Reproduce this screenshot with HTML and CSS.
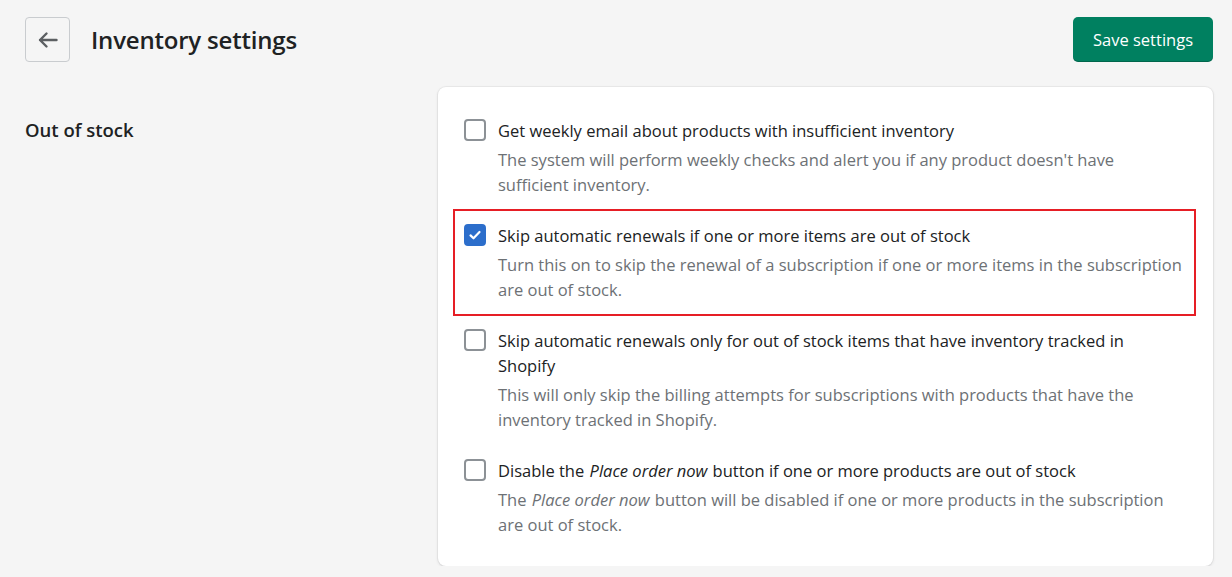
FILE: index.html
```html
<!DOCTYPE html>
<html lang="en">
<head>
<meta charset="utf-8">
<title>Inventory settings</title>
<link rel="stylesheet" href="styles.css">
</head>
<body>
<div class="page">
  <header class="topbar">
    <div class="title-group">
      <button class="back-btn" aria-label="Back">
        <svg width="22" height="22" viewBox="0 0 22 22"><path d="M19.5 11H3M9.5 4.5 3 11l6.5 6.5" fill="none" stroke="#5c5f62" stroke-width="2.4" stroke-linecap="round" stroke-linejoin="round"/></svg>
      </button>
      <h1 class="page-title">Inventory settings</h1>
    </div>
    <button class="save-btn">Save settings</button>
  </header>

  <section class="layout">
    <div class="section-label">Out of stock</div>
    <div class="card">
      <div class="option">
        <span class="checkbox"></span>
        <div class="option-text">
          <div class="option-title">Get weekly email about products with insufficient inventory</div>
          <div class="option-desc">The system will perform weekly checks and alert you if any product doesn't have sufficient inventory.</div>
        </div>
      </div>
      <div class="option highlighted">
        <span class="checkbox checked">
          <svg width="16" height="16" viewBox="0 0 16 16"><path d="M3.5 8.4l3 2.9L12.5 5" fill="none" stroke="#fff" stroke-width="2.2" stroke-linecap="round" stroke-linejoin="round"/></svg>
        </span>
        <div class="option-text">
          <div class="option-title">Skip automatic renewals if one or more items are out of stock</div>
          <div class="option-desc">Turn this on to skip the renewal of a subscription if one or more items in the subscription are out of stock.</div>
        </div>
      </div>
      <div class="option">
        <span class="checkbox"></span>
        <div class="option-text">
          <div class="option-title">Skip automatic renewals only for out of stock items that have inventory tracked in Shopify</div>
          <div class="option-desc">This will only skip the billing attempts for subscriptions with products that have the inventory tracked in Shopify.</div>
        </div>
      </div>
      <div class="option">
        <span class="checkbox"></span>
        <div class="option-text">
          <div class="option-title">Disable the <em>Place order now</em> button if one or more products are out of stock</div>
          <div class="option-desc">The <em>Place order now</em> button will be disabled if one or more products in the subscription are out of stock.</div>
        </div>
      </div>
    </div>
  </section>
</div>
</body>
</html>
```

FILE: styles.css
```css
* { box-sizing: border-box; }
html, body {
  margin: 0;
  padding: 0;
  background: #f5f5f5;
  font-family: "Open Sans", "Noto Sans", "Liberation Sans", sans-serif;
  color: #202223;
}
.page {
  padding: 17px 19px 0 25px;
}
.topbar {
  display: flex;
  align-items: center;
  justify-content: space-between;
  height: 45px;
}
.title-group {
  display: flex;
  align-items: center;
  gap: 21px;
}
.back-btn {
  width: 45px;
  height: 45px;
  border: 1px solid #c9cccf;
  border-radius: 4px;
  background: transparent;
  display: flex;
  align-items: center;
  justify-content: center;
  padding: 0;
}
.page-title {
  margin: 0;
  font-size: 24px;
  font-weight: 600;
  letter-spacing: -0.2px;
  color: #202223;
}
.save-btn {
  height: 45px;
  padding: 0 20px;
  background: #008060;
  color: #fff;
  border: none;
  border-radius: 5px;
  font-family: inherit;
  font-size: 16.5px;
  box-shadow: inset 0 -1px 0 rgba(0,0,0,0.2);
}
.layout {
  display: grid;
  grid-template-columns: 413px 1fr;
  margin-top: 25px;
}
.section-label {
  font-size: 18.5px;
  font-weight: 600;
  padding-top: 30px;
}
.card {
  background: #fff;
  border-radius: 8px;
  box-shadow: 0 0 0 1px rgba(63,63,68,0.05), 0 1px 3px rgba(63,63,68,0.15);
  padding: 31px 29px 29px 26px;
  display: flex;
  flex-direction: column;
  gap: 26px;
}
.option {
  display: flex;
  gap: 12px;
  position: relative;
}
.option.highlighted::after {
  content: "";
  position: absolute;
  top: -14px;
  left: -11px;
  right: -12px;
  bottom: -14px;
  border: 2px solid #e61e25;
  pointer-events: none;
}
.checkbox {
  flex: 0 0 auto;
  width: 22px;
  height: 22px;
  margin-top: 1px;
  border: 2px solid #8c9196;
  border-radius: 4px;
  display: flex;
  align-items: center;
  justify-content: center;
}
.checkbox.checked {
  background: #2c6ecb;
  border-color: #2c6ecb;
}
.option-text {
  flex: 1;
  font-size: 16.5px;
  line-height: 25px;
}
.option-text em {
  padding: 0 1px;
}
.option-title {
  color: #202223;
}
.option-desc {
  color: #6d7175;
  margin-top: 4px;
}
```
